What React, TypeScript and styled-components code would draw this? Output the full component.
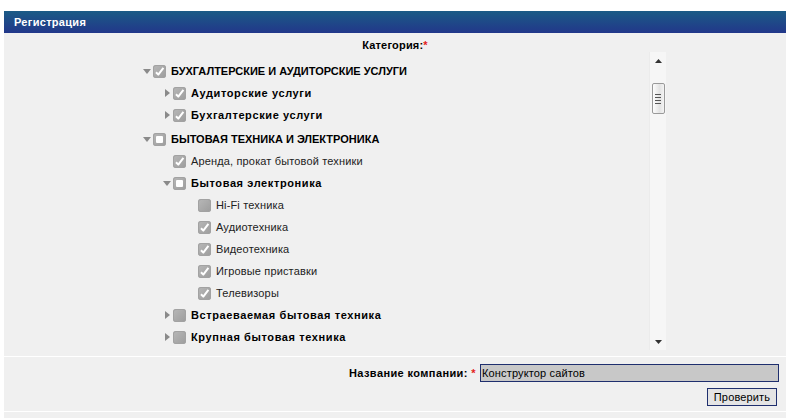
import styled, { createGlobalStyle } from 'styled-components'

type CheckState = 'checked' | 'partial' | 'empty'
type Toggle = 'open' | 'closed' | 'none'

type TreeItem = {
  label: string
  level: 0 | 1 | 2
  toggle: Toggle
  state: CheckState
  bold?: boolean
}

const treeItems: TreeItem[] = [
  { label: 'БУХГАЛТЕРСКИЕ И АУДИТОРСКИЕ УСЛУГИ', level: 0, toggle: 'open', state: 'checked', bold: true },
  { label: 'Аудиторские услуги', level: 1, toggle: 'closed', state: 'checked', bold: true },
  { label: 'Бухгалтерские услуги', level: 1, toggle: 'closed', state: 'checked', bold: true },
  { label: 'БЫТОВАЯ ТЕХНИКА И ЭЛЕКТРОНИКА', level: 0, toggle: 'open', state: 'partial', bold: true },
  { label: 'Аренда, прокат бытовой техники', level: 1, toggle: 'none', state: 'checked' },
  { label: 'Бытовая электроника', level: 1, toggle: 'open', state: 'partial', bold: true },
  { label: 'Hi-Fi техника', level: 2, toggle: 'none', state: 'empty' },
  { label: 'Аудиотехника', level: 2, toggle: 'none', state: 'checked' },
  { label: 'Видеотехника', level: 2, toggle: 'none', state: 'checked' },
  { label: 'Игровые приставки', level: 2, toggle: 'none', state: 'checked' },
  { label: 'Телевизоры', level: 2, toggle: 'none', state: 'checked' },
  { label: 'Встраеваемая бытовая техника', level: 1, toggle: 'closed', state: 'empty', bold: true },
  { label: 'Крупная бытовая техника', level: 1, toggle: 'closed', state: 'empty', bold: true },
]

// left padding of a row per tree level, px
const indents = [3, 23, 58]

const GlobalStyle = createGlobalStyle`
  html, body {
    margin: 0;
    padding: 0;
    background: #fff;
    font-family: "Liberation Sans", Arial, sans-serif;
    font-size: 11px;
    color: #000;
  }
`

const Page = styled.div`
  margin: 11px 0 0 4px;
  width: 782px;
  height: 407px;
  background: #f0f0f0;
  overflow: hidden;
`

const Header = styled.div`
  height: 22px;
  line-height: 22px;
  padding-left: 10px;
  background: linear-gradient(#1b5b86, #22378a);
  color: #fff;
  font-weight: bold;
  font-size: 11px;
  letter-spacing: 0.3px;
`

const CategorySection = styled.div`
  padding: 5px 0 6px;
  border-bottom: 1px solid #fff;
`

const FieldLabel = styled.div`
  text-align: center;
  font-weight: bold;
  line-height: 14px;
  height: 14px;
  letter-spacing: 0.2px;
`

const Required = styled.span`
  color: #e31b1b;
  font-weight: bold;
`

const TreeBox = styled.div`
  display: flex;
  margin-left: 136px;
  width: 526px;
  height: 298px;
`

const TreeList = styled.div`
  flex: 1;
  padding-top: 8px;
  overflow: hidden;
`

const Row = styled.div<{ $level: number; $top: boolean }>`
  display: flex;
  align-items: center;
  height: 22px;
  margin-top: ${p => (p.$top ? '2px' : '0')};
  padding-left: ${p => indents[p.$level]}px;
`

const ToggleSlot = styled.span`
  width: 10px;
  height: 13px;
  display: flex;
  align-items: center;
  justify-content: flex-start;
  flex: none;
`

const Box = styled.span`
  width: 13px;
  height: 13px;
  flex: none;
  border-radius: 3px;
  background: linear-gradient(135deg, #b8b8b8, #9c9c9c);
  box-shadow: inset 0 0 0 1px #a2a2a2;
  display: flex;
  align-items: center;
  justify-content: center;
  margin-right: 5px;
`

const PartialMark = styled.span`
  width: 7px;
  height: 7px;
  background: #fff;
  border-radius: 1px;
`

const RowText = styled.span<{ $bold?: boolean; $caps?: boolean }>`
  font-weight: ${p => (p.$bold ? 'bold' : 'normal')};
  font-size: 11px;
  color: ${p => (p.$bold ? '#000' : '#222')};
  letter-spacing: ${p => (p.$bold && !p.$caps ? '0.6px' : p.$bold ? '0' : '0.15px')};
  white-space: nowrap;
`

const ScrollTrack = styled.div`
  width: 16px;
  flex: none;
  background: #f6f6f6;
  border-left: 1px solid #ebebeb;
  display: flex;
  flex-direction: column;
  align-items: center;
`

const ArrowButton = styled.div`
  height: 17px;
  width: 16px;
  display: flex;
  align-items: center;
  justify-content: center;
`

const Thumb = styled.div`
  margin-top: 14px;
  width: 13px;
  height: 31px;
  border: 1px solid #9a9a9a;
  border-radius: 2px;
  box-sizing: border-box;
  background: linear-gradient(90deg, #fdfdfd, #e3e3e3 60%, #f4f4f4);
  display: flex;
  flex-direction: column;
  align-items: center;
  justify-content: center;
  gap: 2px;
`

const Grip = styled.span`
  width: 6px;
  height: 1px;
  background: #555;
`

const TrackFill = styled.div`
  flex: 1;
`

const CompanySection = styled.div`
  padding: 7px 0 5px;
  border-bottom: 1px solid #fff;
  display: grid;
  grid-template-columns: 472px 299px;
  column-gap: 4px;
  row-gap: 6px;
  align-items: center;
`

const InlineLabel = styled.div`
  text-align: right;
  font-weight: bold;
  letter-spacing: 0.4px;
`

const TextInput = styled.div`
  height: 18px;
  box-sizing: border-box;
  border: 1px solid #1f2f6e;
  background: #c8c8c8;
  line-height: 16px;
  padding-left: 1px;
  font-size: 11px;
  letter-spacing: 0.15px;
`

const ButtonCell = styled.div`
  grid-column: 2;
  display: flex;
  justify-content: flex-end;
  padding-right: 2px;
`

const Button = styled.div`
  width: 70px;
  height: 18px;
  box-sizing: border-box;
  border: 1px solid #1f2f6e;
  background: #e4e4e4;
  text-align: center;
  line-height: 16px;
  font-size: 11px;
  letter-spacing: 0.15px;
`

const Triangle = ({ dir }: { dir: Toggle }) => {
  if (dir === 'none') return null
  return (
    <svg width="8" height="8" viewBox="0 0 8 8">
      {dir === 'open'
        ? <polygon points="0,2 8,2 4,7" fill="#8a8a8a" />
        : <polygon points="2,0 7,4 2,8" fill="#8a8a8a" />}
    </svg>
  )
}

const CheckBox = ({ state }: { state: CheckState }) => (
  <Box>
    {state === 'checked' && (
      <svg width="11" height="11" viewBox="0 0 11 11">
        <path d="M2 6.2 L4.3 8.6 L9.4 1.8" stroke="#fff" strokeWidth="2" fill="none" strokeLinejoin="round" />
      </svg>
    )}
    {state === 'partial' && <PartialMark />}
  </Box>
)

const App = () => (
  <>
    <GlobalStyle />
    <Page>
      <Header>Регистрация</Header>
      <CategorySection>
        <FieldLabel>
          Категория:<Required>*</Required>
        </FieldLabel>
        <TreeBox>
          <TreeList>
            {treeItems.map((item, i) => (
              <Row key={item.label} $level={item.level} $top={item.level === 0 && i > 0}>
                {item.level < 2 && (
                  <ToggleSlot>
                    <Triangle dir={item.toggle} />
                  </ToggleSlot>
                )}
                <CheckBox state={item.state} />
                <RowText $bold={item.bold} $caps={item.level === 0}>{item.label}</RowText>
              </Row>
            ))}
          </TreeList>
          <ScrollTrack>
            <ArrowButton>
              <svg width="7" height="4" viewBox="0 0 7 4">
                <polygon points="0,4 7,4 3.5,0" fill="#333" />
              </svg>
            </ArrowButton>
            <Thumb>
              <Grip />
              <Grip />
              <Grip />
              <Grip />
            </Thumb>
            <TrackFill />
            <ArrowButton>
              <svg width="7" height="4" viewBox="0 0 7 4">
                <polygon points="0,0 7,0 3.5,4" fill="#333" />
              </svg>
            </ArrowButton>
          </ScrollTrack>
        </TreeBox>
      </CategorySection>
      <CompanySection>
        <InlineLabel>
          Название компании: <Required>*</Required>
        </InlineLabel>
        <TextInput>Конструктор сайтов</TextInput>
        <ButtonCell>
          <Button>Проверить</Button>
        </ButtonCell>
      </CompanySection>
    </Page>
  </>
)

export default App
